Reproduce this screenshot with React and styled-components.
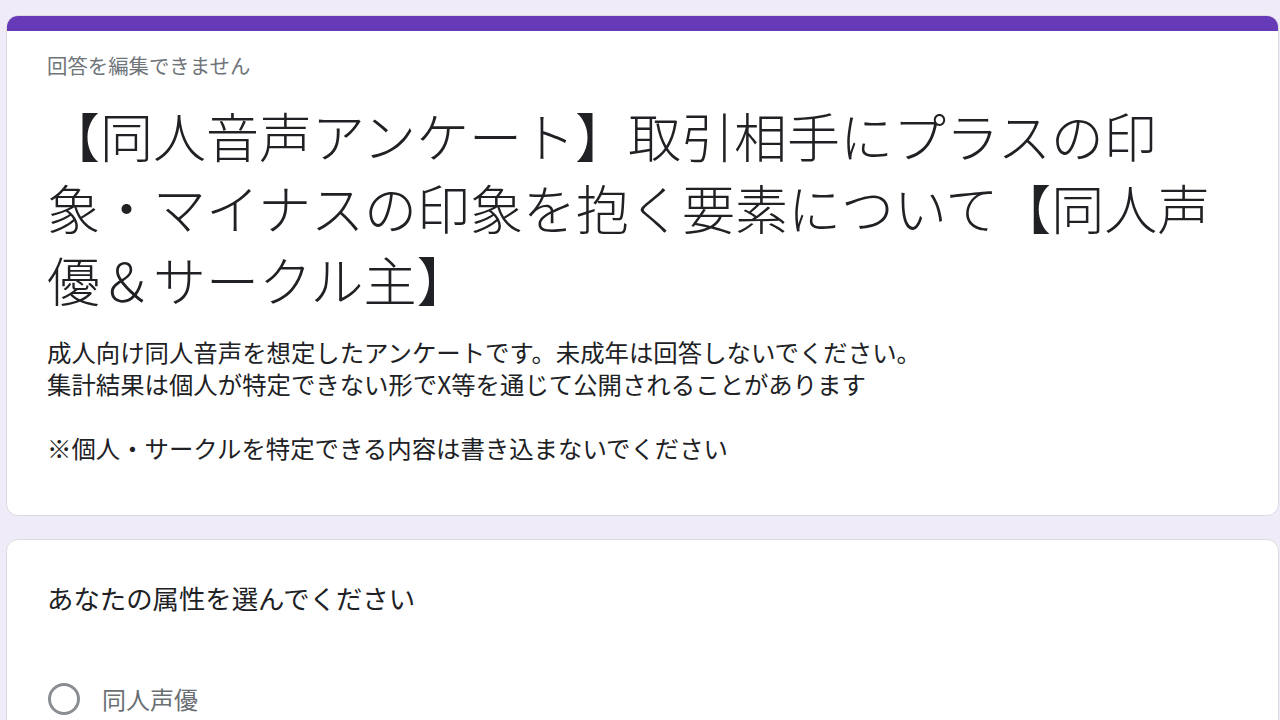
import React from 'react';
import styled, { createGlobalStyle } from 'styled-components';

const GlobalStyle = createGlobalStyle`
  html, body {
    margin: 0;
    padding: 0;
    background: #f0ebf8;
    overflow: hidden;
  }
  body {
    font-family: Roboto, "Noto Sans CJK JP", sans-serif;
    color: #202124;
  }
`;

const Page = styled.div`
  display: flex;
  flex-direction: column;
  gap: 23px;
  padding: 15px 1px 0 6px;
  height: 720px;
  box-sizing: border-box;
`;

const Card = styled.div`
  background: #ffffff;
  border: 1px solid #dadce0;
  border-radius: 12px;
  overflow: hidden;
  flex-shrink: 0;
`;

const TopBar = styled.div`
  height: 16px;
  background: #673ab7;
  margin: -1px -1px 0 -1px;
`;

const CardBody = styled.div`
  display: flex;
  flex-direction: column;
  padding: ${(p) => p.$pad || '20px 40px 51px 40px'};
`;

const Notice = styled.div`
  font-family: "Noto Sans CJK JP", sans-serif;
  font-size: 20.4px;
  line-height: 28px;
  color: #70757a;
  margin-bottom: 20px;
`;

const Title = styled.h1`
  margin: 0 0 21px 0;
  font-family: "Noto Sans CJK JP", sans-serif;
  font-weight: 300;
  font-size: 53px;
  line-height: 72px;
  color: #202124;
`;

const Description = styled.div`
  font-family: "Noto Sans CJK JP", sans-serif;
  font-size: 24.4px;
  line-height: 32px;
  color: #202124;
  white-space: pre-wrap;
`;

const Question = styled.div`
  font-family: "Noto Sans CJK JP", sans-serif;
  font-size: 26.4px;
  line-height: 36px;
  color: #202124;
  margin-bottom: 67px;
`;

const OptionRow = styled.label`
  display: flex;
  align-items: center;
  gap: 22px;
  margin-left: 1px;
`;

const Radio = styled.span`
  width: 32px;
  height: 32px;
  box-sizing: border-box;
  border: 3px solid #8a8e93;
  border-radius: 50%;
  flex-shrink: 0;
`;

const OptionText = styled.span`
  font-family: "Noto Sans CJK JP", sans-serif;
  font-size: 24px;
  line-height: 32px;
  color: #6b6f74;
`;

const description = `成人向け同人音声を想定したアンケートです。未成年は回答しないでください。
集計結果は個人が特定できない形でX等を通じて公開されることがあります

※個人・サークルを特定できる内容は書き込まないでください`;

const App = () => {
  return (
    <>
      <GlobalStyle />
      <Page>
        <Card>
          <TopBar />
          <CardBody>
            <Notice>回答を編集できません</Notice>
            <Title>【同人音声アンケート】取引相手にプラスの印象・マイナスの印象を抱く要素について【同人声優＆サークル主】</Title>
            <Description>{description}</Description>
          </CardBody>
        </Card>
        <Card>
          <CardBody $pad="40px 40px 40px 40px">
            <Question>あなたの属性を選んでください</Question>
            <OptionRow>
              <Radio />
              <OptionText>同人声優</OptionText>
            </OptionRow>
          </CardBody>
        </Card>
      </Page>
    </>
  );
};

export default App;
